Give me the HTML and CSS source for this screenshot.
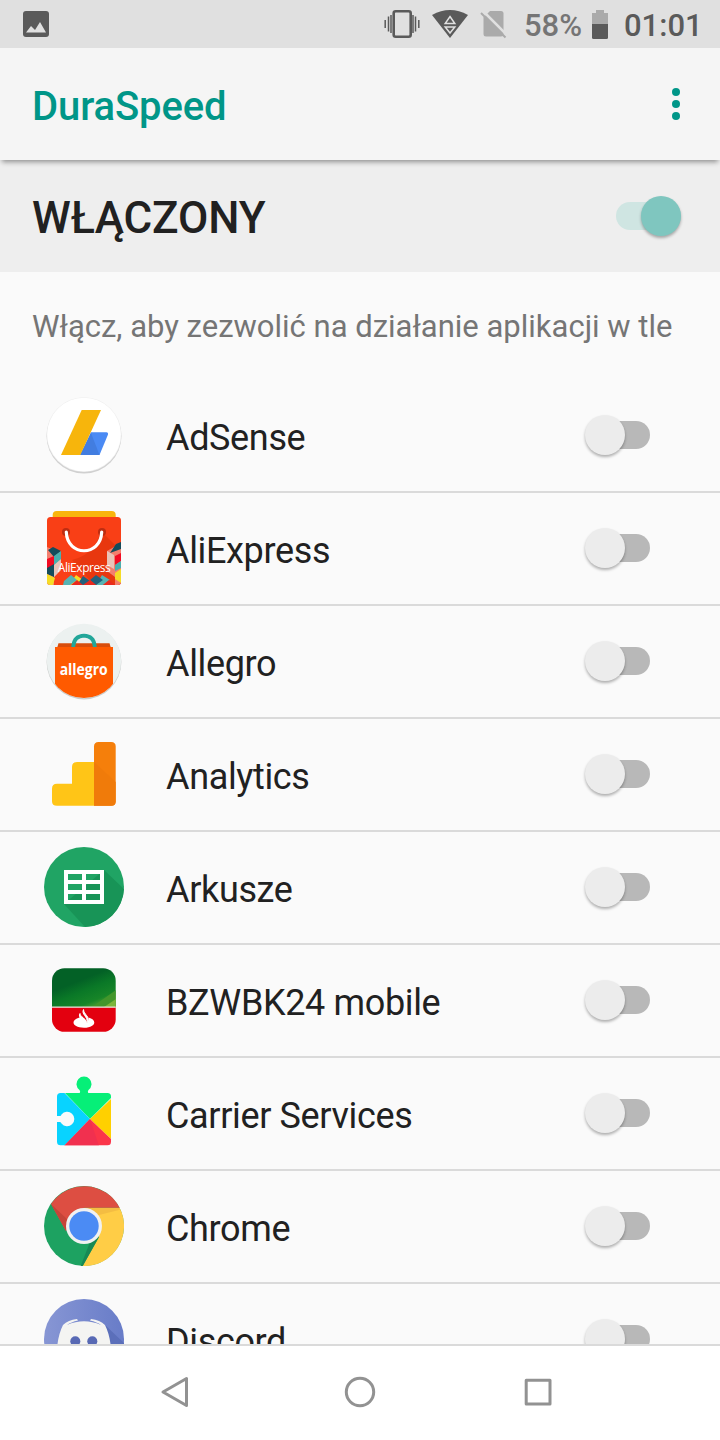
FILE: index.html
```html
<!DOCTYPE html>
<html lang="pl">
<head>
  <meta charset="UTF-8">
  <meta name="viewport" content="width=device-width, initial-scale=1.0">
  <title>DuraSpeed</title>
  <link rel="stylesheet" href="styles.css">
</head>
<body>
  <div class="screen">
    <div class="status-bar">
      <svg class="picture-icon" width="26" height="26" viewBox="0 0 26 26"><rect width="26" height="26" rx="3" fill="#5a5a5a"/><path d="M3 21.500 8 15l4 4 5-8 6 10.500z" fill="#e0e0e0"/></svg>
      <div class="status-right">
        <svg class="vibrate" width="36" height="30" viewBox="0 0 36 30" fill="none" stroke="#5a5a5a"><rect x="9.700" y="2.200" width="17" height="25.600" rx="2" stroke-width="2.600"/><path d="M1.200 11v8M4.500 7.500v15M7 6v18M34.800 11v8M31.500 7.500v15M29 6v18" stroke-width="1.500"/></svg>
        <svg class="wifi" width="36" height="30" viewBox="0 0 36 30"><path d="M0 6Q18-4 36 6L18 29z" fill="#5a5a5a"/><path d="m18 7.500 4.800 7H13.200zM13.200 18h9.600L18 24z" fill="none" stroke="#e0e0e0" stroke-width="1.500"/></svg>
        <svg class="no-sim" width="27" height="30" viewBox="0 0 27 30"><path d="M10 2h11q2.500 0 2.500 2.500V25q0 2.500-2.500 2.500H6Q3.500 27.500 3.500 25V8.500z" fill="#aaa"/><path d="m2 1 25 25" stroke="#e0e0e0" stroke-width="2.500"/><path d="m1 4 24.500 24.500" stroke="#aaa" stroke-width="2"/></svg>
        <span class="percent">58%</span>
        <svg class="battery" width="16" height="29" viewBox="0 0 16 29"><path d="M4 0h8v3h4v11H0V3h4z" fill="#aaa"/><path d="M0 14h16v13.500q0 1.500-1.500 1.500h-13Q0 29 0 27.500z" fill="#5a5a5a"/></svg>
        <span class="clock">01:01</span>
      </div>
    </div>

    <header class="app-bar">
      <h1>DuraSpeed</h1>
      <svg width="8" height="32" viewBox="0 0 8 32" fill="#009688"><circle cx="4" cy="4" r="4"/><circle cx="4" cy="16" r="4"/><circle cx="4" cy="28" r="4"/></svg>
    </header>

    <div class="master">
      <span>WŁĄCZONY</span>
      <div class="switch on"></div>
    </div>

    <div class="content">
      <p class="hint">Włącz, aby zezwolić na działanie aplikacji w tle</p>

      <div class="row">
        <svg class="app-icon" viewBox="0 0 80 80">
          <circle cx="40" cy="41" r="37.500" fill="#d0d0d0"/>
          <circle cx="40" cy="39.600" r="37.400" fill="#eee"/>
          <circle cx="40" cy="39.500" r="36.800" fill="#fff"/>
          <path d="M47 37.300h15.500q2 0 1.400 2.500L55.500 60H36z" fill="#4a8af4"/>
          <path d="M47 38 36 60h19.500z" fill="#427de0"/>
          <path d="M37.700 15H57L36.300 60H17z" fill="#f7b50c"/>
        </svg>
        <span class="name">AdSense</span>
        <div class="switch"></div>
      </div>

      <div class="row">
        <svg class="app-icon" viewBox="0 0 80 80">
          <clipPath id="bag"><rect x="3" y="9" width="74" height="68" rx="3.500"/></clipPath>
          <rect x="8.700" y="3" width="63" height="12" rx="4" fill="#f9b50d"/>
          <g clip-path="url(#bag)">
            <rect x="3" y="9" width="74" height="68" fill="#f93f16"/>
            <path d="M57 23 77 43v34H50L28 52q22-5 29-29z" fill="#e8370f"/>
            <path d="M3 39 17 45v16l-7 8v8H3zM77 35 63 43v20l8 6v8h6z" fill="#f37f6e"/>
            <path d="m4 42 5-3 8 4-7 6zM3 59l7-4v14l-7-3zM72 36l5-2v7l-11 4z" fill="#154c5b"/>
            <path d="m3 51 7-3v8l-7 4zM71 48l6-3v8l-6 4z" fill="#f20b22"/>
            <path d="m10 56 7-5v11l-7 7zM63 43l7 4v14l-7-4z" fill="#e9c4b9"/>
            <path d="m10 48 7-5v8l-7 6zM71 57l6-4v7l-6 3z" fill="#4aafae"/>
            <path d="m3 66 8 4-2 7H3zM32 67l7 5-7 5h-7zM71 65l6-4v14l-6-4z" fill="#f5dc26"/>
            <path d="m27 67 6 5-7 5h-7l1-4zM58 67l8 5-7 5h-7z" fill="#57b3b3"/>
            <path d="m39 68 7 5-6 4h-7zM52 67l7 5-7 5-6-5z" fill="#23617c"/>
            <path d="m46 72 6 5H39zM65 72l6 5H59zM33 72l6 5H27z" fill="#e9291e"/>
          </g>
          <circle cx="22" cy="24" r="4" fill="#bd2d12"/><circle cx="58" cy="24" r="4" fill="#bd2d12"/>
          <path d="M22.300 24c1 25 34.400 25 35.400 0" fill="none" stroke="#fff" stroke-width="3.200" stroke-linecap="round"/>
          <text x="40.300" y="63.700" class="ali-text" textLength="53">AliExpress</text>
        </svg>
        <span class="name">AliExpress</span>
        <div class="switch"></div>
      </div>

      <div class="row">
        <svg class="app-icon" viewBox="0 0 80 80">
          <clipPath id="disc"><circle cx="40" cy="40" r="37"/></clipPath>
          <circle cx="40" cy="41" r="37.400" fill="#c9cccb"/>
          <circle cx="40" cy="40" r="37.200" fill="#ecf1f0"/>
          <g clip-path="url(#disc)">
            <path d="M14.500 22.300h51l1.500 5H13z" fill="#d84d0b"/>
            <rect x="11" y="26" width="58" height="52" fill="#ff5a00"/>
            <path d="M29.300 26v-1q1-10 10.700-10.300Q49.700 15 50.700 25v1" fill="none" stroke="#22a699" stroke-width="3.800"/>
          </g>
          <text x="39.700" y="54" class="allegro-text" textLength="48" lengthAdjust="spacingAndGlyphs">allegro</text>
        </svg>
        <span class="name">Allegro</span>
        <div class="switch"></div>
      </div>

      <div class="row">
        <svg class="app-icon" viewBox="0 0 80 80">
          <path d="M50 28H33q-5 0-5 5v16.700H13q-5 0-5 5v12.500q0 4.500 5 4.500h37z" fill="#ffc517"/>
          <path d="M54.500 8h12.700q4.500 0 4.500 4.500v54.700q0 4.500-4.500 4.500H50V12.500Q50 8 54.500 8z" fill="#f57f0b"/>
          <path d="M50 28 71.700 48v19.200q0 4.500-4.500 4.500H50z" fill="#f07b0a"/>
        </svg>
        <span class="name">Analytics</span>
        <div class="switch"></div>
      </div>

      <div class="row">
        <svg class="app-icon" viewBox="0 0 80 80">
          <circle cx="40" cy="40" r="40" fill="#20a464"/>
          <path d="M60 23 80 42A40 40 0 0 1 41 80L20 57z" fill="#189457"/>
          <path d="M20 23h40v34H20zM24 27v6h14v-6zm18 0v6h14v-6zM24 37v6h14v-6zm18 0v6h14v-6zM24 47v6h14v-6zm18 0v6h14v-6z" fill="#fff" fill-rule="evenodd"/>
        </svg>
        <span class="name">Arkusze</span>
        <div class="switch"></div>
      </div>

      <div class="row">
        <svg class="app-icon" viewBox="0 0 80 80">
          <clipPath id="bank"><rect x="8" y="8.200" width="63.700" height="63.600" rx="12.500"/></clipPath>
          <linearGradient id="stripe" x1="0.450" y1="0.300" x2="0.900" y2="1"><stop offset="0" stop-color="#036126"/><stop offset="0.300" stop-color="#0a7827"/><stop offset="0.650" stop-color="#178528"/><stop offset="1" stop-color="#7db43a"/></linearGradient>
          <g clip-path="url(#bank)">
            <rect x="8" y="8" width="64" height="40" fill="url(#stripe)"/>
            <path d="M48 47 72 30v17z" fill="#43962b"/>
            <path d="M60 47 72 39v8z" fill="#7db43a"/>
            <rect x="8" y="46.500" width="64" height="1.600" fill="#e9e0d8"/>
            <rect x="8" y="47.800" width="64" height="25" fill="#e3000f"/>
          </g>
          <path d="M35.500 57.500C26 60 28 67.500 40 67.700c12-.2 13.500-8 4.500-10.200.3 3-1 4-1.500 5-1-4-6-7-7.500-5z" fill="#fff"/>
          <path d="M39.500 49.500c-2.500 5 4.500 7 3.500 12.500 4-5-3.500-7.500-3.500-12.500zM36 53.500c-2.500 4 3.500 6 4 9.500 3-4.500-4-6-4-9.500z" fill="#fff" stroke="#fff"/>
        </svg>
        <span class="name">BZWBK24 mobile</span>
        <div class="switch"></div>
      </div>

      <div class="row">
        <svg class="app-icon" viewBox="0 0 80 80">
          <clipPath id="puzzle"><rect x="13" y="20" width="54" height="52.200" rx="3.500"/></clipPath>
          <path d="M35 20.500q2-1 .5-3.500A7.500 7.500 0 1 1 44.500 17q-1.500 2.500.5 3.500z" fill="#06ef78"/>
          <g clip-path="url(#puzzle)">
            <path d="M20 19h53L46 46z" fill="#06ef78"/>
            <path d="M13 20h7.500L46 46 20 73h-7z" fill="#08d3ff"/>
            <path d="M67 26v40L46 46z" fill="#ffd000"/>
            <path d="M46 46 67 66v7H20z" fill="#fb3549"/>
            <path d="M46 46 55 73H20z" fill="#f1304f"/>
          </g>
          <path d="M12 43h4q1 0 1.500-1.500a7.200 7.200 0 1 1 0 9Q17 49 16 49h-4z" fill="#fafafa"/>
        </svg>
        <span class="name">Carrier Services</span>
        <div class="switch"></div>
      </div>

      <div class="row">
        <svg class="app-icon" viewBox="0 0 80 80">
          <circle cx="40" cy="40" r="40" fill="#1da261"/>
          <path d="M40 21.700h35.600A40 40 0 0 1 38.700 80L55 51z" fill="#ffcd46"/>
          <path d="M40 21.700h35.600l.4 2L55 29z" fill="#f4bd42"/>
          <path d="M7 18A40 40 0 0 1 75.700 21.700H40L22 45z" fill="#dd4e42"/>
          <path d="m7 18 15 27 2-11z" fill="#c64439"/>
          <path d="m55 51-16.300 29h-2L46 56z" fill="#188954"/>
          <circle cx="40" cy="40" r="18" fill="#f1f1f1"/>
          <circle cx="40" cy="40" r="14.700" fill="#4b8bf4"/>
        </svg>
        <span class="name">Chrome</span>
        <div class="switch"></div>
      </div>

      <div class="row">
        <svg class="app-icon" viewBox="0 0 80 80">
          <linearGradient id="blurple"><stop offset="0" stop-color="#8796d4"/><stop offset="1" stop-color="#687cc8"/></linearGradient>
          <circle cx="40" cy="40" r="40" fill="url(#blurple)"/>
          <path d="m59 24 21 20v10H66z" fill="#5b6fba"/>
          <path d="M19 26q5-5 14-6l1 1.500q-7 1.500-11 4.500 17-7.500 34 0-4-3-11-4.500l1-1.500q9 1 14 6 5 10 6 24H13q1-14 6-24z" fill="#f4f4f2"/>
          <circle cx="31.300" cy="42.300" r="5" fill="#5869b4"/><circle cx="48.300" cy="42.300" r="5" fill="#5869b4"/>
        </svg>
        <span class="name">Discord</span>
        <div class="switch"></div>
      </div>
    </div>

    <nav class="nav-bar">
      <svg class="back" width="32" height="32" viewBox="0 0 32 32"><path d="M27.500 2.500v27L4 16z"/></svg>
      <svg width="32" height="32" viewBox="0 0 32 32"><circle cx="16" cy="16" r="13.700"/></svg>
      <svg width="32" height="32" viewBox="0 0 32 32"><rect x="4.200" y="4.200" width="23.800" height="23.800"/></svg>
    </nav>
  </div>
</body>
</html>
```

FILE: styles.css
```css
* {
  box-sizing: border-box;
}
body {
  margin: 0;
  font-family: Roboto, sans-serif;
  background: #fafafa;
  color: #212121;
}
svg {
  display: block;
  flex-shrink: 0;
}
.screen {
  width: 720px;
  height: 1440px;
  display: flex;
  flex-direction: column;
  overflow: hidden;
}
.status-bar {
  height: 48px;
  flex-shrink: 0;
  display: flex;
  justify-content: space-between;
  align-items: center;
  padding: 0 18px 0 23px;
  background: #e0e0e0;
}
.status-right {
  display: flex;
  align-items: center;
  font-size: 31px;
  font-weight: 500;
  line-height: 46px;
  color: #5a5a5a;
}
.wifi {
  margin-left: 12px;
}
.no-sim {
  margin-left: 12px;
}
.percent {
  width: 58px;
  margin-left: 17px;
  padding-top: 4px;
  color: #757575;
}
.battery {
  margin-left: 10px;
}
.clock {
  width: 78px;
  margin-left: 16px;
  padding-top: 4px;
}
.app-bar {
  position: relative;
  height: 112px;
  flex-shrink: 0;
  display: flex;
  justify-content: space-between;
  align-items: center;
  padding: 0 40px 0 32px;
  background: #f5f5f5;
  box-shadow: 0 4px 5px -2px rgba(0, 0, 0, 0.4);
}
.app-bar h1 {
  margin: 4px 0 0;
  font-size: 40px;
  font-weight: 500;
  letter-spacing: -0.1px;
  color: #009688;
}
.master {
  height: 112px;
  flex-shrink: 0;
  display: flex;
  justify-content: space-between;
  align-items: center;
  padding: 0 39px 0 32px;
  background: #eee;
  font-size: 44px;
  font-weight: 500;
  letter-spacing: -0.1px;
}
.master span {
  padding-top: 4px;
}
.content {
  flex: 1;
  min-height: 0;
  overflow: hidden;
}
.hint {
  height: 108px;
  margin: 0;
  padding-left: 32px;
  font-size: 31px;
  line-height: 109px;
  white-space: nowrap;
  color: #757575;
}
.row {
  height: 113px;
  display: flex;
  align-items: center;
  padding: 0 70px 1px 44px;
  border-bottom: 2px solid #dadada;
}
.app-icon {
  width: 80px;
  height: 80px;
}
.name {
  flex: 1;
  padding: 6px 0 0 42px;
  font-size: 36px;
  line-height: 42px;
  letter-spacing: -0.35px;
  white-space: nowrap;
}
.ali-text {
  font: 12px "Open Sans", sans-serif;
  fill: #fff;
  text-anchor: middle;
}
.allegro-text {
  font: bold 16px "Open Sans", sans-serif;
  fill: #fff;
  text-anchor: middle;
}
/* track */
.switch {
  width: 65px;
  height: 28px;
  display: flex;
  align-items: center;
  border-radius: 14px;
  background: linear-gradient(#b8b8b8, #b8b8b8) right center / 40px 28px no-repeat;
}
/* thumb */
.switch::before {
  content: "";
  width: 40px;
  height: 40px;
  flex-shrink: 0;
  border-radius: 50%;
  background: #ececec;
  box-shadow: 0 2px 3px rgba(0, 0, 0, 0.3);
}
.switch.on {
  justify-content: flex-end;
  background: #cfe5e2;
}
.switch.on::before {
  background: #7fc6bf;
}
.nav-bar {
  height: 96px;
  flex-shrink: 0;
  display: flex;
  align-items: center;
  gap: 146px;
  padding: 0 0 2px 159px;
  border-top: 2px solid #dadada;
  background: #fff;
}
.nav-bar svg {
  fill: none;
  stroke: #929292;
  stroke-width: 3;
  stroke-linejoin: round;
}
.nav-bar .back {
  margin-right: 7px;
}
```
